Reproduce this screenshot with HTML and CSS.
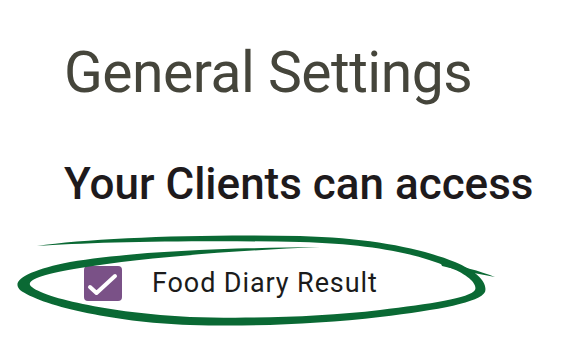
FILE: index.html
```html
<!DOCTYPE html>
<html lang="en">
<head>
    <meta charset="UTF-8">
    <meta name="viewport" content="width=device-width, initial-scale=1.0">
    <title>General Settings</title>
    <link rel="stylesheet" href="styles.css">
</head>
<body>
    <div class="page">
        <h1>General Settings</h1>
        <h2>Your Clients can access</h2>
        <label class="access-item">
            <svg class="checkbox" viewBox="0 0 38 35" width="38" height="35">
                <rect x="0" y="0" width="38" height="35" rx="4" fill="#7a5187"/>
                <polyline points="6,21 12.5,27 31,10" fill="none" stroke="#fff" stroke-width="4" stroke-linecap="round" stroke-linejoin="round"/>
            </svg>
            <span>Food Diary Result</span>
        </label>

        <!-- hand drawn circle around the option -->
        <svg class="marker" viewBox="0 0 584 359" width="584" height="359">
            <path fill="#0a6934" d="M37,246 C90,238 200,234 300,236 C370,238 420,248 455,262 C476,271 488,282 485,292 C480,302 440,310 380,317 C320,324 250,327 190,325 C110,322 40,305 20,290 C10,280 30,270 70,262 C130,252 220,248 320,247 C230,251 140,258 80,268 C45,274 28,279 30,285 C38,297 110,313 190,317 C250,319 320,317 380,310 C430,304 470,298 475,290 C478,283 465,273 448,267 C415,253 370,244 300,242 C200,240 90,242 37,246 Z"/>
            <path fill="#0a6934" d="M440,261 C460,266 480,271 495,277 C478,274 458,270 442,266 Z"/>
        </svg>
    </div>
</body>
</html>
```

FILE: styles.css
```css
body {
    margin: 0;
    font-family: Roboto, "Liberation Sans", sans-serif;
    background: #ffffff;
}
.page {
    position: relative;
    width: 584px;
    height: 359px;
    padding: 44px 0 0 64px;
    box-sizing: border-box;
    display: flex;
    flex-direction: column;
    align-items: flex-start;
}
h1 {
    margin: 0;
    font-size: 57px;
    line-height: 1;
    font-weight: 400;
    letter-spacing: -0.5px;
    color: #45453b;
}
h2 {
    margin: 61px 0 0 0;
    font-size: 44px;
    line-height: 1;
    font-weight: 500;
    color: #1e1a1c;
}
.access-item {
    margin: 60px 0 0 20px;
    display: flex;
    align-items: center;
    gap: 30px;
    font-size: 27px;
    line-height: 1;
    letter-spacing: 0.9px;
    color: #1b1b1b;
}
.checkbox {
    display: block;
}
.marker {
    position: absolute;
    left: 0;
    top: 0;
    pointer-events: none;
}
```
